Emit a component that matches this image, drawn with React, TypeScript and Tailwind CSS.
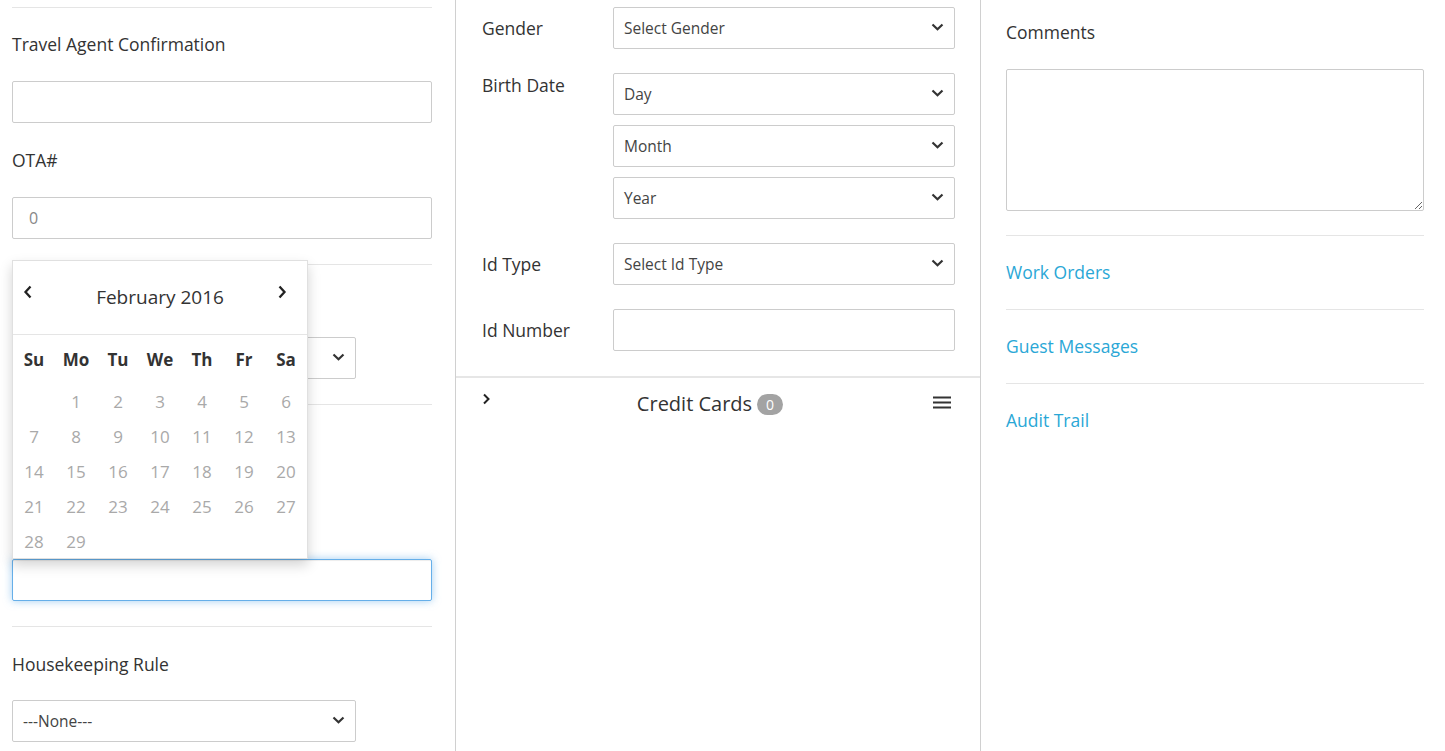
import React from 'react'

const font = "font-['Open_Sans',sans-serif]"

const Chevron = () => (
  <svg width="13" height="8" viewBox="0 0 13 8" className="shrink-0 -mt-[3px]">
    <path d="M1.5 1.5 6.5 6.2 11.5 1.5" fill="none" stroke="#333" strokeWidth="2.2" />
  </svg>
)

const Select = ({ text, className = '' }: { text: string; className?: string }) => (
  <div
    className={`h-[42px] border border-[#ccc] rounded-[2px] bg-white flex items-center justify-between pl-[10px] pr-[10px] text-[15.5px] text-[#444] ${className}`}
  >
    <span className="pt-[2px]">{text}</span>
    <Chevron />
  </div>
)

const Label = ({ children, className = '' }: { children: React.ReactNode; className?: string }) => (
  <div className={`text-[17.5px] leading-[22px] text-[#333] ${className}`}>{children}</div>
)

const Rule = ({ className = '' }: { className?: string }) => (
  <div className={`border-t border-[#e5e5e5] ${className}`} />
)

const Calendar = () => {
  const days: (number | null)[] = [null]
  for (let d = 1; d <= 29; d++) days.push(d)
  return (
    <div className="absolute left-3 top-[260px] w-[296px] h-[299px] bg-white border border-[rgba(0,0,0,0.12)] shadow-[0_6px_12px_rgba(0,0,0,0.175)] z-10">
      <div className="h-[74px] border-b border-[#e5e5e5] grid grid-cols-[1fr_auto_1fr] items-start">
        <div className="pl-[10px] pt-[24px]">
          <svg width="10" height="14" viewBox="0 0 10 14">
            <path d="M7.5 1.5 2.5 7l5 5.5" fill="none" stroke="#222" strokeWidth="2.3" />
          </svg>
        </div>
        <div className="pt-[23px] text-[19px] leading-[26px] text-[#333]">February 2016</div>
        <div className="pr-[20px] pt-[24px] flex justify-end">
          <svg width="10" height="14" viewBox="0 0 10 14">
            <path d="M2.5 1.5 7.5 7l-5 5.5" fill="none" stroke="#222" strokeWidth="2.3" />
          </svg>
        </div>
      </div>
      <div className="grid grid-cols-7">
        {['Su', 'Mo', 'Tu', 'We', 'Th', 'Fr', 'Sa'].map((d) => (
          <div key={d} className="h-[49px] pt-px flex items-center justify-center text-[17px] font-bold text-[#333]">
            {d}
          </div>
        ))}
        {days.map((d, i) => (
          <div key={i} className="h-[35px] flex items-center justify-center text-[17px] text-[#a9a9a9]">
            {d ?? ''}
          </div>
        ))}
      </div>
    </div>
  )
}

const FieldRow = ({
  label,
  children,
  top = false,
  className = '',
}: {
  label: string
  children: React.ReactNode
  top?: boolean
  className?: string
}) => (
  <div className={`flex ${top ? 'items-start' : 'items-center'} ${className}`}>
    <Label className={`w-[131px] shrink-0 ${top ? 'pt-px' : ''}`}>{label}</Label>
    <div className="w-[342px] flex flex-col gap-[10px]">{children}</div>
  </div>
)

export default function App() {
  return (
    <div className={`${font} w-[1445px] h-[751px] overflow-hidden bg-white flex`}>
      {/* left column */}
      <div className="relative w-[456px] shrink-0 border-r border-[#d0d0d0] pl-3 pr-[23px]">
        <Rule className="mt-[7px]" />
        <Label className="mt-[25px]">Travel Agent Confirmation</Label>
        <div className="mt-[26px] h-[42px] border border-[#ccc] rounded-[2px]" />
        <Label className="mt-[26px]">OTA#</Label>
        <div className="mt-[26px] h-[42px] border border-[#ccc] rounded-[2px] flex items-center pl-[16px] text-[16px] text-[#888]">
          0
        </div>
        <Rule className="mt-[25px]" />
        <div className="mt-[25px] h-[22px]" />
        <Select text="" className="mt-[25px] w-[344px]" />
        <Rule className="mt-[25px]" />
        <div className="h-[154px]" />
        <div className="h-[42px] border border-[#66afe9] rounded-[2px] shadow-[inset_0_1px_1px_rgba(0,0,0,0.075),0_0_8px_rgba(102,175,233,0.6)]" />
        <Rule className="mt-[25px]" />
        <Label className="mt-[26px]">Housekeeping Rule</Label>
        <Select text="---None---" className="mt-[25px] w-[344px]" />
        <Calendar />
      </div>

      {/* middle column */}
      <div className="w-[525px] shrink-0 border-r border-[#d0d0d0] flex flex-col">
        <div className="pt-[7px] pl-[26px] pr-[25px] flex flex-col">
          <FieldRow label="Gender">
            <Select text="Select Gender" />
          </FieldRow>
          <FieldRow label="Birth Date" top className="mt-[24px]">
            <Select text="Day" />
            <Select text="Month" />
            <Select text="Year" />
          </FieldRow>
          <FieldRow label="Id Type" className="mt-[24px]">
            <Select text="Select Id Type" />
          </FieldRow>
          <FieldRow label="Id Number" className="mt-[24px]">
            <div className="h-[42px] border border-[#ccc] rounded-[2px]" />
          </FieldRow>
        </div>
        <div className="mt-[25px] border-t-2 border-[#e6e6e6] h-[52px] flex items-center pl-[26px] pr-[29px]">
          <svg width="9" height="12" viewBox="0 0 9 12" className="self-start mt-[15px]">
            <path d="M2 1.5 6.5 6 2 10.5" fill="none" stroke="#222" strokeWidth="2" />
          </svg>
          <div className="flex-1 flex items-center justify-center gap-[5px] mt-[2px] pr-[4px]">
            <span className="text-[20px] leading-[26px] text-[#333]">Credit Cards</span>
            <span className="h-[21px] min-w-[26px] rounded-full bg-[#a3a3a3] text-white text-[14px] flex items-center justify-center px-[7px]">
              0
            </span>
          </div>
          <svg width="18" height="13" viewBox="0 0 18 13" className="-mt-[2px]">
            <path d="M0 1.5h18M0 6.5h18M0 11.5h18" stroke="#333" strokeWidth="2" />
          </svg>
        </div>
      </div>

      {/* right column */}
      <div className="flex-1 pl-[25px] pr-[21px]">
        <Label className="pt-[21px]">Comments</Label>
        <textarea className="mt-[26px] block w-full h-[142px] border border-[#ccc] rounded-[2px] outline-none" />
        <Rule className="mt-[24px]" />
        {['Work Orders', 'Guest Messages', 'Audit Trail'].map((t, i) => (
          <div key={t}>
            <div className="pt-[25px] pb-[26px] text-[17.5px] leading-[22px] text-[#2aa7d6]">{t}</div>
            {i < 2 && <Rule />}
          </div>
        ))}
      </div>
    </div>
  )
}
